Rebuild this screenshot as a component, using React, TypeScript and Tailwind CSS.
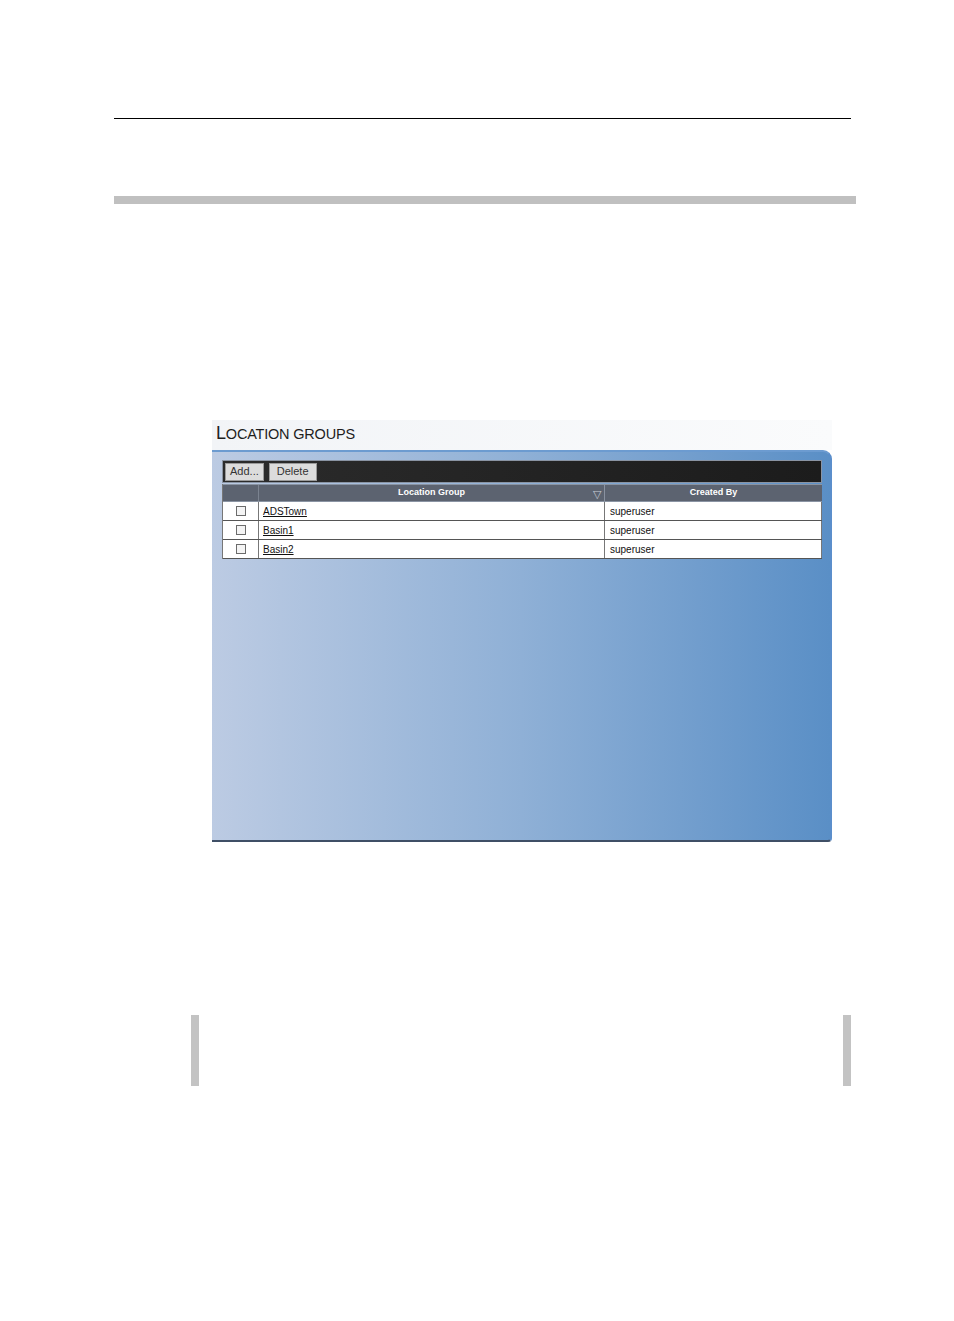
import React from "react";

const rows = [
  { name: "ADSTown", by: "superuser" },
  { name: "Basin1", by: "superuser" },
  { name: "Basin2", by: "superuser" },
];

function Checkbox() {
  return <span className="block h-[10px] w-[10px] border border-[#6b6b6b] bg-[#f4f4f4]" />;
}

export default function App() {
  return (
    <div className="min-h-[1321px] w-[954px] bg-white pt-[118px] font-['Liberation_Sans',Arial,sans-serif]">
      {/* page header rule */}
      <div className="ml-[114px] h-px w-[737px] bg-black" />

      {/* section bar */}
      <div className="ml-[114px] mt-[77px] h-[8px] w-[742px] bg-[#c0c0c0]" />

      {/* screenshot of the Location Groups page */}
      <div className="ml-[212px] mt-[216px] w-[620px]">
        <div className="flex h-[30px] items-start bg-gradient-to-r from-[#f2f4f7] to-[#fafbfc] pl-[4px] pt-[4px]">
          <span className="text-[18px] leading-none tracking-[-0.2px] text-[#1e1e1e]">
            L<span className="text-[14.5px]">OCATION GROUPS</span>
          </span>
        </div>

        <div className="h-[392px] rounded-tr-[9px] rounded-br-[4px] border-t-2 border-r-2 border-b-2 border-t-[#6c9bd0] border-r-[#5b8ecb] border-b-[#3f4f66] bg-gradient-to-r from-[#bccbe3] via-[#8fb0d6] to-[#5a8fc6] pl-[10px] pr-[8px] pt-[8px]">
          {/* toolbar */}
          <div className="flex h-[23px] items-center gap-[5px] border border-[#8a94a3] bg-gradient-to-r from-[#2b2b2b] to-[#1c1c1c] px-[2px]">
            <button className="h-[18px] border border-[#9a9a9a] bg-[#dcdcdc] px-[4px] text-[11px] leading-none text-[#333]">
              Add...
            </button>
            <button className="h-[18px] border border-[#9a9a9a] bg-[#dcdcdc] px-[7px] text-[11px] leading-none text-[#333]">
              Delete
            </button>
          </div>

          {/* grid */}
          <div className="mt-[1px] border-l border-[#777]">
            <div className="flex h-[18px] border-y border-[#8a94a3] bg-[#5c6370] text-[9px] font-bold text-white">
              <div className="w-[36px] border-r border-[#7b8390]" />
              <div className="relative flex w-[346px] items-center justify-center border-r border-[#8a92a0]">
                Location Group
                <span className="absolute right-[3px] top-[1px] text-[11px] font-normal text-[#c9ced6]">▽</span>
              </div>
              <div className="flex flex-1 items-center justify-center">Created By</div>
            </div>
            {rows.map((r) => (
              <div key={r.name} className="flex h-[19px] border-b border-[#555] bg-white text-[10px] text-[#111]">
                <div className="flex w-[36px] items-center justify-center border-r border-[#777]">
                  <Checkbox />
                </div>
                <div className="flex w-[346px] items-center border-r border-[#777] pl-[4px]">
                  <a className="cursor-pointer underline">{r.name}</a>
                </div>
                <div className="flex flex-1 items-center border-r border-[#777] pl-[5px]">{r.by}</div>
              </div>
            ))}
          </div>
        </div>
      </div>

      {/* note box */}
      <div className="ml-[191px] mt-[173px] flex h-[71px] w-[660px] justify-between">
        <div className="w-[8px] bg-[#c3c3c3]" />
        <div className="w-[8px] bg-[#c3c3c3]" />
      </div>
    </div>
  );
}
